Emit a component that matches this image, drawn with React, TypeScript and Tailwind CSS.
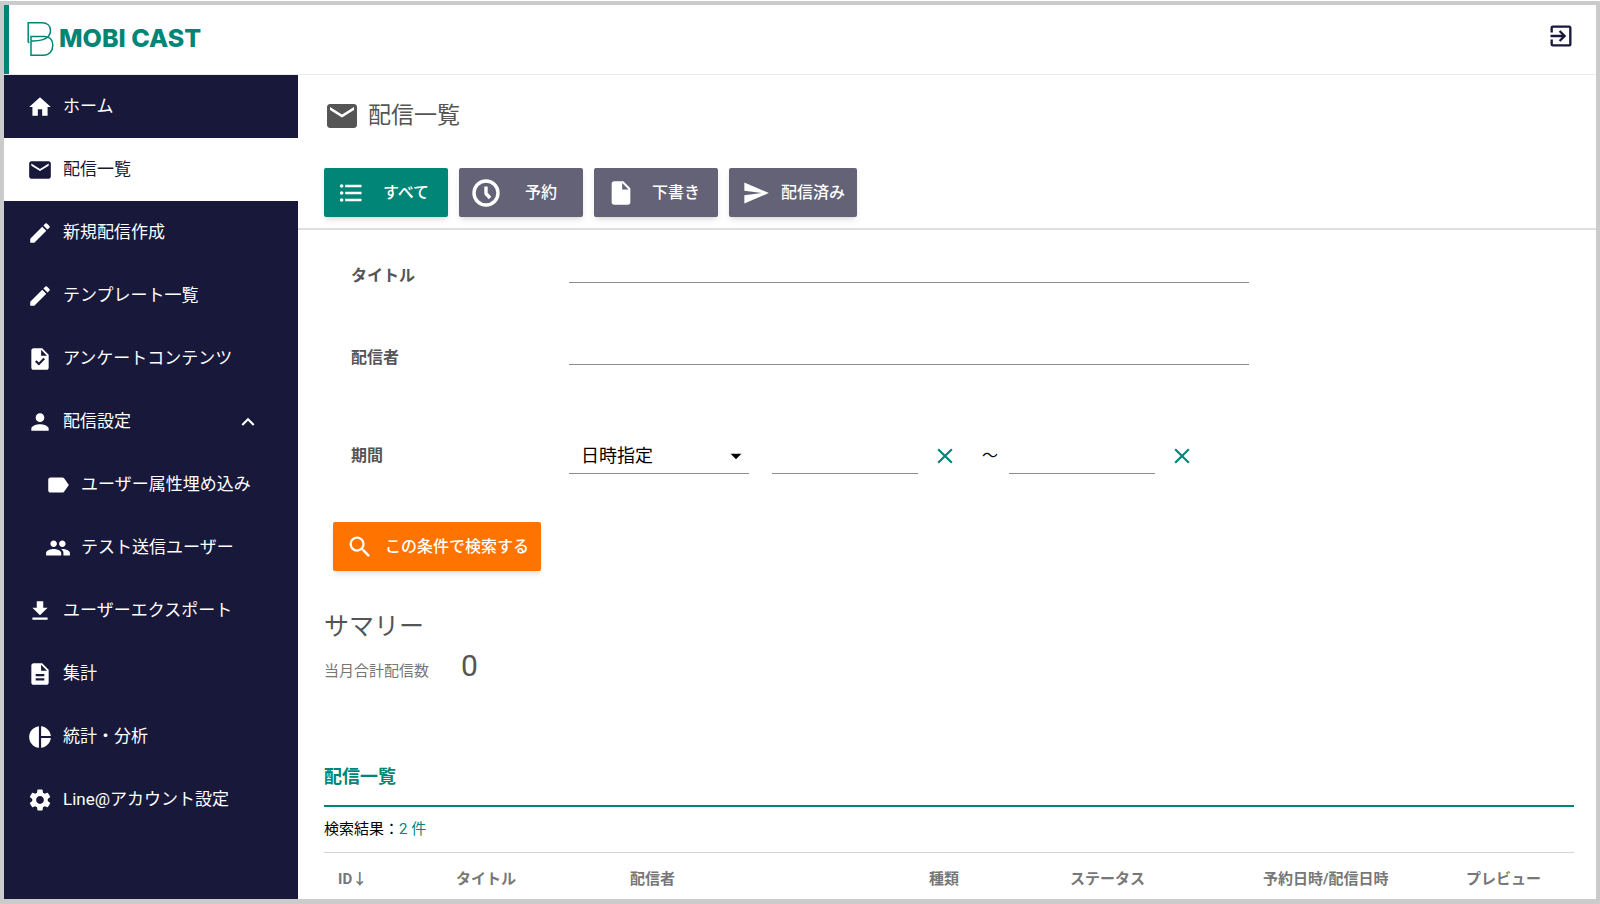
import { useState } from 'react';
import type { IconType } from 'react-icons';
import {
  MdArrowDropDown,
  MdClose,
  MdEmail,
  MdExitToApp,
  MdExpandLess,
  MdExpandMore,
  MdFileDownload,
  MdDescription,
  MdEdit,
  MdFormatListBulleted,
  MdGroup,
  MdHome,
  MdInsertDriveFile,
  MdLabel,
  MdPerson,
  MdPieChart,
  MdSearch,
  MdSend,
  MdSettings,
  MdTask,
} from 'react-icons/md';

interface NavItem {
  label: string;
  icon: IconType;
  active?: boolean;
  children?: NavItem[];
}

const NAV: NavItem[] = [
  { label: 'ホーム', icon: MdHome },
  { label: '配信一覧', icon: MdEmail, active: true },
  { label: '新規配信作成', icon: MdEdit },
  { label: 'テンプレート一覧', icon: MdEdit },
  { label: 'アンケートコンテンツ', icon: MdTask },
  {
    label: '配信設定',
    icon: MdPerson,
    children: [
      { label: 'ユーザー属性埋め込み', icon: MdLabel },
      { label: 'テスト送信ユーザー', icon: MdGroup },
    ],
  },
  { label: 'ユーザーエクスポート', icon: MdFileDownload },
  { label: '集計', icon: MdDescription },
  { label: '統計・分析', icon: MdPieChart },
  { label: 'Line@アカウント設定', icon: MdSettings },
];

const COLUMNS = [
  { label: 'ID↓', width: 'w-[118px]' },
  { label: 'タイトル', width: 'w-[174px]' },
  { label: '配信者', width: '' },
  { label: '種類', width: 'w-[141px]' },
  { label: 'ステータス', width: 'w-[193px]' },
  { label: '予約日時/配信日時', width: 'w-[203px]' },
  { label: 'プレビュー', width: 'w-[122px]' },
];

function ClockIcon() {
  return (
    <svg viewBox="0 0 28 28" className="h-7 w-7" fill="none" stroke="currentColor" aria-hidden="true">
      <circle cx="14" cy="14" r="12" strokeWidth="3.4" />
      <path d="M14 7.500v7l4 4.500" strokeWidth="3.4" strokeLinejoin="round" />
    </svg>
  );
}

const TABS = [
  { id: 'all', label: 'すべて', icon: <MdFormatListBulleted className="h-7 w-7" /> },
  { id: 'reserved', label: '予約', icon: <ClockIcon /> },
  { id: 'draft', label: '下書き', icon: <MdInsertDriveFile className="h-7 w-7" /> },
  { id: 'sent', label: '配信済み', icon: <MdSend className="h-7 w-7" /> },
];

function Logo() {
  return (
    <a href="#" className="flex h-[34px] items-center gap-[5px] text-[#008577]">
      <svg viewBox="0 0 28 36" className="h-9 w-7" fill="none" stroke="currentColor" strokeWidth="1.5" aria-hidden="true">
        <path d="M2.200 21.500V1.800h13.800c5 0 8.500 2.800 8.500 7.600 0 4.600-3 7.600-7.500 9.200-3.500 1.200-7.500 1.500-11.700 1.400" />
        <path d="M2.200 21.500h1.300M5 15.500h13.800c4.700 0 8 3.400 8 8.700 0 6-3.800 10-9.500 10H5z" />
      </svg>
      <span className="font-[Inter] text-[25px] font-extrabold">MOBI CAST</span>
    </a>
  );
}

function NavLink({ item, nested = false }: { item: NavItem; nested?: boolean }) {
  const Icon = item.icon;
  return (
    <a
      href="#"
      className={`flex h-[63px] items-center gap-[10px] text-[17px] ${nested ? 'pl-[41px]' : 'pl-[23px]'} ${
        item.active ? 'bg-white text-[#18183a]' : 'text-white'
      }`}
    >
      <Icon className="h-[26px] w-[26px]" />
      {item.label}
    </a>
  );
}

function NavGroup({ item }: { item: NavItem }) {
  const [open, setOpen] = useState(true);
  const Icon = item.icon;
  const Chevron = open ? MdExpandLess : MdExpandMore;
  return (
    <>
      <button
        type="button"
        aria-expanded={open}
        onClick={() => setOpen(!open)}
        className="flex h-[63px] w-full items-center gap-[10px] pr-[37px] pl-[23px] text-[17px] text-white"
      >
        <Icon className="h-[26px] w-[26px]" />
        {item.label}
        <Chevron className="ml-auto h-[26px] w-[26px]" />
      </button>
      {open && item.children?.map((child) => <NavLink key={child.label} item={child} nested />)}
    </>
  );
}

export default function App() {
  const [tab, setTab] = useState('all');
  const [from, setFrom] = useState('');
  const [to, setTo] = useState('');

  return (
    <div className="flex min-h-screen flex-col bg-white pt-px font-[Roboto,'Noto_Sans_CJK_JP',sans-serif] text-black">
      <div className="flex flex-1 flex-col border-4 border-b-[5px] border-[#cbcbcb]">
        <header className="border-b border-[#eaeaea]">
          <div className="flex h-[69px] items-start justify-between border-l-[5px] border-[#008577] pt-[17px] pr-[21px] pl-[17px]">
            <Logo />
            <button type="button" aria-label="ログアウト" className="text-[#18183a]">
              <MdExitToApp className="h-7 w-7" />
            </button>
          </div>
        </header>

        <div className="flex flex-1">
          <nav className="w-[294px] shrink-0 bg-[#18183a]">
            {NAV.map((item) =>
              item.children ? (
                <NavGroup key={item.label} item={item} />
              ) : (
                <NavLink key={item.label} item={item} />
              )
            )}
          </nav>

          <main className="min-w-0 flex-1">
            {/* Title and tabs */}
            <div className="border-b-2 border-[#dedede] px-[26px] pt-[23px] pb-[11px]">
              <h1 className="flex items-center gap-2 text-[23px] leading-9 text-[#555555]">
                <MdEmail className="h-9 w-9" />
                配信一覧
              </h1>
              <div className="mt-[34px] flex gap-[11px]">
                {TABS.map((t) => (
                  <button
                    key={t.id}
                    type="button"
                    onClick={() => setTab(t.id)}
                    className={`flex h-[49px] min-w-[124px] items-center gap-[11px] rounded-xs pr-3 pl-[13px] text-base font-medium text-white shadow-md ${
                      tab === t.id ? 'bg-[#008577]' : 'bg-[#646276]'
                    }`}
                  >
                    {t.icon}
                    <span className="flex-1 text-center">{t.label}</span>
                  </button>
                ))}
              </div>
            </div>

            <div className="pr-[22px] pl-[26px]">
              {/* Search form */}
              <form onSubmit={(e) => e.preventDefault()}>
                <div className="mt-[21px] flex items-end pl-[27px]">
                  <label htmlFor="title" className="w-[218px] shrink-0 text-base leading-[14px] font-bold text-[#555555]">
                    タイトル
                  </label>
                  <input id="title" className="h-8 w-full max-w-[680px] border-b border-[#8c8c8c] outline-none" />
                </div>
                <div className="mt-[50px] flex items-end pl-[27px]">
                  <label htmlFor="sender" className="w-[218px] shrink-0 text-base leading-[14px] font-bold text-[#555555]">
                    配信者
                  </label>
                  <input id="sender" className="h-8 w-full max-w-[680px] border-b border-[#8c8c8c] outline-none" />
                </div>
                <div className="mt-[73px] flex h-9 items-center pl-[27px]">
                  <label htmlFor="period" className="w-[218px] shrink-0 text-base leading-[14px] font-bold text-[#555555]">
                    期間
                  </label>
                  <div className="relative h-9 w-[180px]">
                    <select
                      id="period"
                      className="h-full w-full appearance-none border-b border-[#8c8c8c] pl-3 text-lg outline-none"
                    >
                      <option>日時指定</option>
                    </select>
                    <MdArrowDropDown className="pointer-events-none absolute top-[5px] right-0 h-[26px] w-[26px]" />
                  </div>
                  <input
                    aria-label="開始日時"
                    value={from}
                    onChange={(e) => setFrom(e.target.value)}
                    className="ml-[23px] h-9 w-[146px] border-b border-[#8c8c8c] outline-none"
                  />
                  <button type="button" aria-label="開始日時をクリア" onClick={() => setFrom('')} className="ml-[14px] text-[#008577]">
                    <MdClose className="h-[26px] w-[26px]" />
                  </button>
                  <span className="ml-6 text-base">～</span>
                  <input
                    aria-label="終了日時"
                    value={to}
                    onChange={(e) => setTo(e.target.value)}
                    className="ml-[11px] h-9 w-[146px] border-b border-[#8c8c8c] outline-none"
                  />
                  <button type="button" aria-label="終了日時をクリア" onClick={() => setTo('')} className="ml-[14px] text-[#008577]">
                    <MdClose className="h-[26px] w-[26px]" />
                  </button>
                </div>
                <button
                  type="submit"
                  className="mt-12 ml-[9px] flex h-[49px] items-center gap-[11px] rounded-xs bg-[#ff7300] pr-3 pl-[13px] text-base font-medium text-white shadow-md"
                >
                  <MdSearch className="h-7 w-7" />
                  この条件で検索する
                </button>
              </form>

              {/* Summary */}
              <h2 className="mt-10 text-[25px] leading-8 text-[#555555]">サマリー</h2>
              <div className="mt-[3px] flex items-baseline gap-8 leading-10">
                <span className="text-[15px] text-[#777777]">当月合計配信数</span>
                <span className="text-3xl leading-10 text-[#555555]">0</span>
              </div>

              {/* Results */}
              <h2 className="mt-[72px] border-b-2 border-[#008577] pb-[14px] text-lg leading-7 font-bold text-[#008577]">
                配信一覧
              </h2>
              <p className="mt-[10px] mb-[11px] text-[15px] leading-6">
                検索結果：<span className="text-[#008577]">2 件</span>
              </p>
              <table className="w-full table-fixed border-t border-[#d4d4d4]">
                <thead>
                  <tr>
                    {COLUMNS.map((col) => (
                      <th
                        key={col.label}
                        className={`pt-4 pb-[10px] pl-[14px] text-left text-[15px] leading-5 font-bold whitespace-nowrap text-[#777777] ${col.width}`}
                      >
                        {col.label}
                      </th>
                    ))}
                  </tr>
                </thead>
              </table>
            </div>
          </main>
        </div>
      </div>
    </div>
  );
}
